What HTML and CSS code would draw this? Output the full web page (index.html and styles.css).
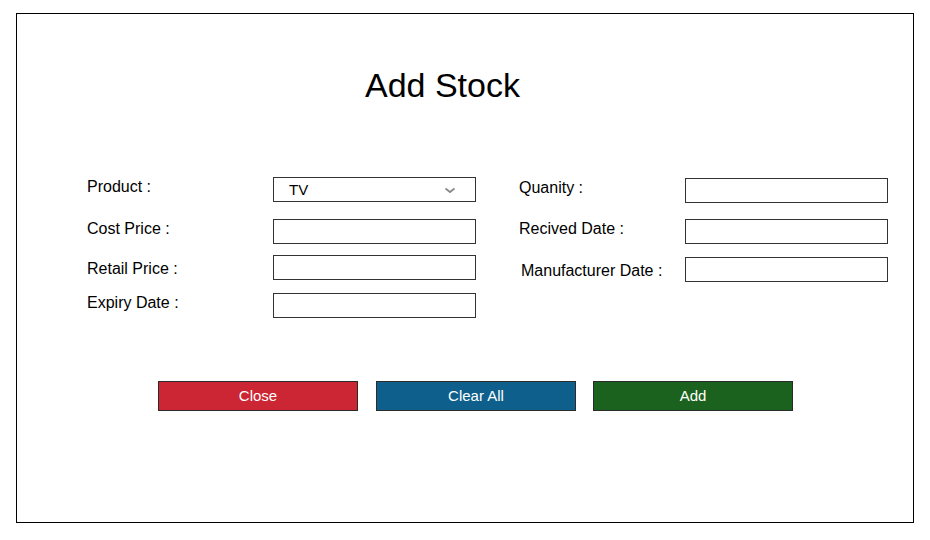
FILE: index.html
```html
<!DOCTYPE html>
<html>
<head>
<meta charset="utf-8">
<link rel="stylesheet" href="styles.css">
</head>
<body>
<div class="frame">
  <h1 class="title">Add Stock</h1>
  <div class="form">
    <div class="col col-left">
      <div class="row r1"><span class="label">Product :</span>
        <div class="box select"><span class="val">TV</span>
          <svg class="chev" width="12" height="7" viewBox="0 0 12 7"><polyline points="1.5,1.5 6,5 10.5,1.5" fill="none" stroke="#8a8a8a" stroke-width="1.8"/></svg>
        </div>
      </div>
      <div class="row r2"><span class="label">Cost Price :</span><div class="box"></div></div>
      <div class="row r3"><span class="label up">Retail Price :</span><div class="box"></div></div>
      <div class="row r4"><span class="label">Expiry Date :</span><div class="box"></div></div>
    </div>
    <div class="col col-right">
      <div class="row q1"><span class="label">Quanity :</span><div class="box"></div></div>
      <div class="row q2"><span class="label">Recived Date :</span><div class="box"></div></div>
      <div class="row q3"><span class="label indent up">Manufacturer Date :</span><div class="box"></div></div>
    </div>
  </div>
  <div class="buttons">
    <button class="btn btn-close">Close</button>
    <button class="btn btn-clear">Clear All</button>
    <button class="btn btn-add">Add</button>
  </div>
</div>
</body>
</html>
```
FILE: styles.css
```css
html, body {
  margin: 0;
  padding: 0;
  background: #ffffff;
  font-family: "Liberation Sans", Arial, sans-serif;
  color: #000;
}
.frame {
  box-sizing: border-box;
  margin: 13px 0 0 16px;
  width: 898px;
  height: 510px;
  border: 1px solid #000;
}
.title {
  margin: 51px 0 0 348px;
  font-size: 34px;
  line-height: 40px;
  font-weight: normal;
}
.form {
  display: flex;
  margin-top: 72px;
  padding-left: 70px;
}
.col {
  display: flex;
  flex-direction: column;
}
.col-left { width: 389px; }
.col-right { margin-left: 43px; }
.row {
  display: flex;
  align-items: center;
  height: 25px;
}
.col-left .label { width: 186px; }
.col-right .label { width: 166px; }
.label {
  font-size: 16px;
  line-height: 25px;
  position: relative;
  top: -3px;
}
.label.up { top: 1px; }
.label.indent { padding-left: 2px; box-sizing: border-box; }
.r2 { margin-top: 17px; }
.r3 { margin-top: 11px; }
.r4 { margin-top: 13px; }
.q1 { margin-top: 1px; }
.q2 { margin-top: 16px; }
.q3 { margin-top: 13px; }
.box {
  box-sizing: border-box;
  width: 203px;
  height: 25px;
  border: 1px solid #333;
  background: #fff;
}
.select {
  display: flex;
  align-items: center;
  justify-content: space-between;
  padding: 0 19px 0 15px;
}
.val { font-size: 15px; }
.chev { display: block; margin-top: 1px; }
.buttons {
  display: flex;
  margin: 63px 0 0 141px;
}
.btn {
  box-sizing: border-box;
  width: 200px;
  height: 30px;
  border: 1px solid #2b2b2b;
  color: #fff;
  font-family: "Liberation Sans", Arial, sans-serif;
  font-size: 15px;
  padding: 0 0 2px 0;
}
.btn-clear { margin-left: 18px; }
.btn-add { margin-left: 17px; }
.btn-close { background: #cc2533; }
.btn-clear { background: #0e5f8b; }
.btn-add { background: #1a621d; }
```
